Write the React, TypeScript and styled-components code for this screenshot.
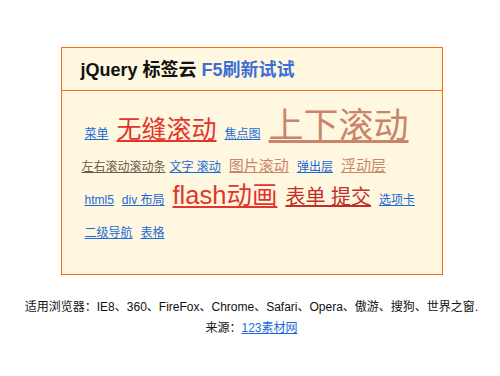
import styled, { createGlobalStyle } from 'styled-components';

const GlobalStyle = createGlobalStyle`
  body {
    margin: 0;
    background: #ffffff;
    font-family: 'Liberation Sans', 'Noto Sans CJK SC', sans-serif;
  }
`;

const StyledPage = styled.div`
  padding: 47px 0 0 3px;
  width: 500px;
  box-sizing: border-box;
`;

const StyledCloud = styled.div`
  width: 380px;
  margin: 0 auto;
  border: 1px solid #ff6a10;
  background: #fff7df;
`;

const StyledHeader = styled.h3`
  margin: 0;
  height: 42px;
  line-height: 45px;
  padding-left: 19px;
  border-bottom: 1px solid #ff6a10;
  font-size: 18px;
  font-weight: 700;
  color: #111111;
`;

const StyledHint = styled.span`
  color: #3d6fd6;
`;

const StyledTags = styled.div`
  height: 183px;
  padding: 27px 20px 0 19px;
  font-size: 12px;
  line-height: 33px;
  box-sizing: border-box;
`;

/* line-height 0 keeps big words from pushing the rows apart */
const StyledTag = styled.a<{ $size: number; $color: string; $flush?: boolean }>`
  margin: ${({ $flush }) => ($flush ? '0 0 0 1px' : '0 4px')};
  font-size: ${({ $size }) => $size}px;
  line-height: 0;
  white-space: nowrap;
  color: ${({ $color }) => $color};
  text-decoration: underline;
  cursor: pointer;
`;

const StyledFooter = styled.div`
  margin-top: 22px;
  text-align: center;
  font-size: 12px;
  line-height: 21px;
  color: #111111;
`;

const StyledLink = styled.a`
  color: #1a6bd6;
  text-decoration: underline;
`;

const blue = '#1a6bd6';
const red = '#e2352b';
const tan = '#c8856a';
const brown = '#6e5a4a';
const darkRed = '#c0302a';

const tags = [
  { text: '菜单', size: 12, color: blue },
  { text: '无缝滚动', size: 25, color: red },
  { text: '焦点图', size: 12, color: blue },
  { text: '上下滚动', size: 35, color: tan },
  { text: '左右滚动滚动条', size: 12, color: brown, flush: true },
  { text: '文字 滚动', size: 12, color: blue },
  { text: '图片滚动', size: 15, color: tan },
  { text: '弹出层', size: 12, color: blue },
  { text: '浮动层', size: 15, color: tan },
  { text: 'html5', size: 12, color: blue },
  { text: 'div 布局', size: 12, color: blue },
  { text: 'flash动画', size: 25.5, color: red },
  { text: '表单 提交', size: 20, color: darkRed },
  { text: '选项卡', size: 12, color: blue },
  { text: '二级导航', size: 12, color: blue },
  { text: '表格', size: 12, color: blue },
];

export default function App() {
  return (
    <StyledPage>
      <GlobalStyle />
      <StyledCloud>
        <StyledHeader>
          jQuery 标签云 <StyledHint>F5刷新试试</StyledHint>
        </StyledHeader>
        <StyledTags>
          {tags.map((tag) => (
            <StyledTag
              key={tag.text}
              $size={tag.size}
              $color={tag.color}
              $flush={tag.flush}
            >
              {tag.text}
            </StyledTag>
          ))}
        </StyledTags>
      </StyledCloud>
      <StyledFooter>
        适用浏览器：IE8、360、FireFox、Chrome、Safari、Opera、傲游、搜狗、世界之窗.
        <br />
        来源：<StyledLink>123素材网</StyledLink>
      </StyledFooter>
    </StyledPage>
  );
}
